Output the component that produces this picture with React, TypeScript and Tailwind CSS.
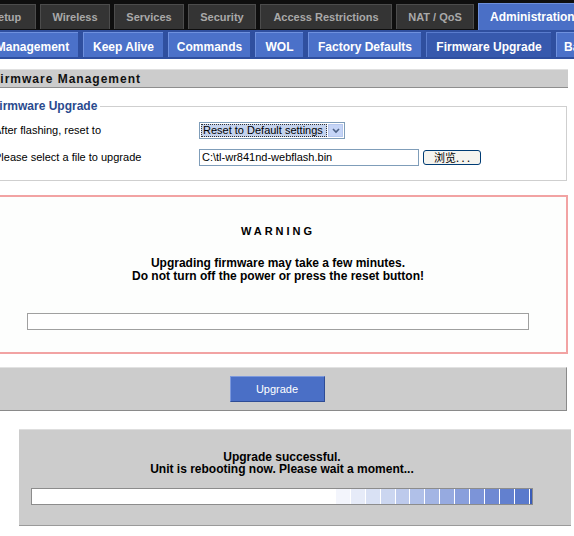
const topTabs = [
  { label: 'Setup', w: 'w-[60px] -ml-[24px]' },
  { label: 'Wireless', w: 'w-[70px]' },
  { label: 'Services', w: 'w-[70px]' },
  { label: 'Security', w: 'w-[68px]' },
  { label: 'Access Restrictions', w: 'w-[132px]' },
  { label: 'NAT / QoS', w: 'w-[78px]' },
]

const subTabs = [
  { label: 'Management', w: 'w-[92px] -ml-[14px]' },
  { label: 'Keep Alive', w: 'w-[80px]' },
  { label: 'Commands', w: 'w-[82px]' },
  { label: 'WOL', w: 'w-[48px]' },
  { label: 'Factory Defaults', w: 'w-[113px]' },
]

const segments = [
  '#f3f5fc', '#e6ebf8', '#d9e1f4', '#cbd6f0', '#bdcaec', '#b0c0e8',
  '#a3b5e4', '#96aae0', '#899fdc', '#7c94d8', '#6f89d3', '#6280cf', '#5a7acc',
]

export default function App() {
  return (
    <div className="w-[574px] h-[536px] overflow-hidden bg-white font-['Liberation_Sans',Arial,sans-serif] text-[11px] text-black">
      {/* main nav */}
      <div className="h-[30px] bg-[#0e0e0e] flex items-end gap-[4px]">
        {topTabs.map((t) => (
          <div
            key={t.label}
            className={`${t.w} shrink-0 h-[25px] mb-[1px] bg-[#343434] border-t border-l border-r border-[#4c4c4c] flex items-center justify-center font-bold text-[#a9a9a9]`}
          >
            {t.label}
          </div>
        ))}
        <div className="w-[110px] shrink-0 h-[27px] bg-[#4a6fc6] border-t border-l border-[#6d8fdb] flex items-center pl-[11px] font-bold text-[12px] text-white">
          Administration
        </div>
      </div>

      {/* sub nav */}
      <div className="h-[29px] bg-[#2f4f9f] flex items-start gap-[5px] pt-[2px]">
        {subTabs.map((t) => (
          <div
            key={t.label}
            className={`${t.w} shrink-0 h-[25px] pt-[4px] bg-[#4b71c9] border-t border-l border-[#6f91de] flex items-center justify-center font-bold text-[12px] text-white`}
          >
            {t.label}
          </div>
        ))}
        <div className="w-[125px] shrink-0 h-[25px] pt-[3px] bg-[#3759ad] border-t border-l border-[#5a7ccd] flex items-center justify-center font-bold text-[12px] text-white">
          Firmware Upgrade
        </div>
        <div className="w-[80px] shrink-0 h-[25px] pt-[4px] bg-[#4b71c9] border-t border-l border-[#6f91de] flex items-center pl-[7px] font-bold text-[12px] text-white">
          Backup
        </div>
      </div>

      <div className="-ml-[12px] w-[580px]">
        {/* section header */}
        <div className="mt-[10px] h-[19px] bg-[#cccccc] border-t border-[#e0e0e0] border-b border-b-[#8e8e8e] flex items-center pl-[4px] font-bold text-[12px] tracking-[1px] text-[#111]">
          Firmware Management
        </div>

        {/* fieldset */}
        <fieldset className="mt-[9px] mr-[1px] border border-[#cfcfcf] pl-[3px] pr-2 pb-[14px] pt-0">
          <legend className="-ml-[1px] px-[1px] pr-[3px] font-bold text-[12px] text-[#2a4a8e]">Firmware Upgrade</legend>
          <div className="flex items-center h-[17px] mt-[7px] ml-[2px]">
            <div className="w-[205px] shrink-0">After flashing, reset to</div>
            <div className="h-[17px] w-[146px] border border-[#7f9db9] bg-white flex items-center p-[1px]">
              <div className="flex-1 h-full bg-[#c4d3ee] border border-dotted border-[#333] flex items-center pl-[1px] leading-none">
                Reset to Default settings
              </div>
              <div className="w-[15px] h-full ml-[1px] bg-[#c6d5f7] border border-[#b7c8ee] flex items-center justify-center">
                <svg width="8" height="6" viewBox="0 0 8 6">
                  <path d="M1 1 L4 4 L7 1" fill="none" stroke="#4d6185" strokeWidth="1.6" />
                </svg>
              </div>
            </div>
          </div>
          <div className="flex items-center h-[17px] mt-[10px] ml-[2px]">
            <div className="w-[205px] shrink-0">Please select a file to upgrade</div>
            <div className="h-[17px] w-[220px] border border-[#7f9db9] bg-white flex items-center pl-[2px]">
              C:\tl-wr841nd-webflash.bin
            </div>
            <div className="ml-[4px] h-[15px] w-[58px] rounded-[3px] border border-[#003c74] bg-[#f5f4ef] flex items-center justify-center text-[11px] font-['Noto_Sans_CJK_SC',sans-serif] leading-none">
              浏览. . .
            </div>
          </div>
        </fieldset>

        {/* warning */}
        <div className="mt-[14px] h-[159px] border-2 border-[#f2a3a3] bg-[#fdfefd] flex flex-col items-center">
          <div className="mt-[26px] font-bold text-[11px] tracking-[3px]">WARNING</div>
          <div className="mt-[17px] font-bold text-[12px] leading-[13px] text-center">
            Upgrading firmware may take a few minutes.
            <br />
            Do not turn off the power or press the reset button!
          </div>
          <div className="mt-[30px] w-[502px] h-[17px] border border-[#a0a0a0] bg-white" />
        </div>

        {/* button bar */}
        <div className="mt-[13px] mr-[1px] h-[44px] bg-[#cccccc] border-t border-[#e2e2e2] border-r border-r-[#8a8a8a] border-b border-b-[#8a8a8a] flex items-center justify-center">
          <div className="w-[95px] h-[26px] bg-[#4a6fc6] border-t border-l border-[#7d99dc] border-b border-r border-b-[#2e4c95] border-r-[#2e4c95] flex items-center justify-center text-white text-[11px]">
            Upgrade
          </div>
        </div>

        {/* reboot box */}
        <div className="mt-[18px] ml-[31px] w-[552px] h-[97px] bg-[#cccccc] border-t border-[#dedede] border-b border-b-[#9a9a9a] pl-[12px] pr-[38px] flex flex-col items-center">
          <div className="mt-[21px] font-bold text-[12px] leading-[12px] text-center">
            Upgrade successful.
            <br />
            Unit is rebooting now. Please wait a moment...
          </div>
          <div className="mt-[13px] w-[502px] h-[17px] border border-[#8c8c8c] bg-white flex">
            <div className="w-[305px]" />
            {segments.map((c, i) => (
              <div key={i} className="w-[15px] h-full border-r border-white" style={{ backgroundColor: c }} />
            ))}
            <div className="w-[2px] h-full bg-[#3a5cb8]" />
          </div>
        </div>
      </div>
    </div>
  )
}
